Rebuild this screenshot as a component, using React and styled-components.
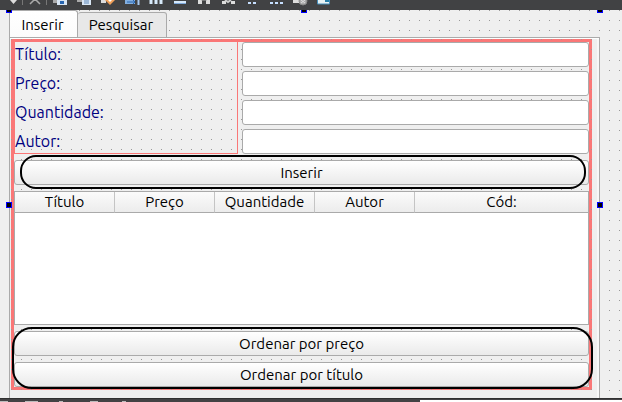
import React from "react";
import styled, { createGlobalStyle } from "styled-components";

const Global = createGlobalStyle`
  *, *::before, *::after { box-sizing: border-box; }
  body {
    margin: 0;
    overflow: hidden;
    background: #efefef;
    color: #000;
    font: 15px/20px Ubuntu, "Noto Sans", "Open Sans", sans-serif;
  }
`;

const dots = `url("data:image/svg+xml,%3Csvg xmlns='http://www.w3.org/2000/svg' width='10' height='10'%3E%3Crect width='1' height='1' fill='%23999'/%3E%3C/svg%3E")`;

const Window = styled.div`
  display: flex;
  flex-direction: column;
  min-height: 100vh;
`;

const Toolbar = styled.header`
  height: 10px;
  background: #414244;
  overflow: hidden;
  svg { display: block; }
`;

const Canvas = styled.main`
  position: relative;
  flex: 1;
  display: flex;
  padding: 0 22px 0 9px;
  background: linear-gradient(#efefef, #efefef) 0 0 / 9px 100% no-repeat, ${dots} 9px 0, #efefef;
`;

const TabWidget = styled.section`
  flex: 1;
  display: flex;
  flex-direction: column;
`;

const TabList = styled.div`
  display: flex;
  align-items: flex-end;
  height: 28px;
`;

const Tab = styled.button`
  height: ${(p) => (p.$active ? 28 : 26)}px;
  width: ${(p) => (p.$active ? 69 : 89)}px;
  padding: ${(p) => (p.$active ? "1px 2px 0 0" : "0 2px 0 0")};
  border: 1px solid #aaa;
  border-left-width: ${(p) => (p.$active ? 1 : 0)}px;
  border-bottom-width: ${(p) => (p.$active ? 0 : 1)}px;
  border-radius: 3px 3px 0 0;
  background: ${(p) => (p.$active ? "linear-gradient(#fff, #fbfbfb)" : "#e8e8e8")};
  color: inherit;
  font: inherit;
`;

const Pane = styled.div`
  flex: 1;
  display: flex;
  margin-top: -1px;
  padding: 1px 7px 8px 1px;
  border: 1px solid #aaa;
  border-bottom: 0;
  background: #efefef;
  box-shadow: inset 0 1px #fff, inset -2px 0 #f8f8f8;
`;

const Layout = styled.form`
  flex: 1;
  display: flex;
  flex-direction: column;
  padding: 3px;
  background: ${dots} 0 0, linear-gradient(#efefef, #efefef) content-box, #fa7777;
`;

const Fields = styled.div`
  display: grid;
  grid-template-columns: 224px 1fr;
  column-gap: 4px;
`;

const Labels = styled.div`
  display: grid;
  grid-auto-rows: 29px;
  height: 112px;
  border: 1px solid #fa7777;
  border-top-width: 0;
`;

const Label = styled.label`
  color: #000080;
  font-size: 16px;
  line-height: 24px;
`;

const Inputs = styled.div`
  display: grid;
  grid-auto-rows: 25px;
  row-gap: 4px;
`;

const TextBox = styled.input`
  width: 100%;
  min-width: 0;
  padding: 0 6px;
  border: 1px solid #aaa;
  border-radius: 3px;
  background: #fff;
  font: inherit;
`;

const PushButton = styled.button`
  height: 25px;
  padding: 0;
  border: 1px solid #aaa;
  border-radius: 3px;
  background: linear-gradient(#fff, #eaeaea);
  color: inherit;
  font: inherit;
`;

const InsertArea = styled.div`
  position: relative;
  display: grid;
  padding: 6px 0;
`;

const SortArea = styled.div`
  position: relative;
  display: grid;
  row-gap: 6px;
  padding-top: 6px;
`;

const Outline = styled.div`
  position: absolute;
  pointer-events: none;
  inset: ${(p) => p.$inset};
  border: 2px solid #000;
  border-radius: ${(p) => p.$radius}px;
`;

const TableView = styled.div`
  flex: 1;
  border: 1px solid #aaa;
  background: #fff;
`;

const Table = styled.table`
  width: 100%;
  table-layout: fixed;
  border-collapse: separate;
  border-spacing: 0;
`;

const HeaderCell = styled.th`
  width: ${(p) => p.$width};
  height: 21px;
  padding: 0;
  border-bottom: 1px solid #aaa;
  border-right: ${(p) => (p.$last ? "0" : "1px solid #c4c4c4")};
  background: linear-gradient(#fbfbfb, #ececec);
  font-weight: 400;
  line-height: 20px;
`;

const Handles = styled.div`
  position: absolute;
  inset: 0;
  overflow: hidden;
  pointer-events: none;
`;

const Handle = styled.i`
  position: absolute;
  width: 6px;
  height: 6px;
  border: 1px solid #00f;
  background: #000;
  left: ${(p) => p.$left};
  top: ${(p) => p.$top};
`;

const Footer = styled.footer`
  display: flex;
  height: 4px;
  border-top: 1px solid #303030;
  background: #434244;
`;

const FooterIcons = styled.div`
  flex: 0 0 420px;
  overflow: hidden;
  svg { display: block; }
`;

const FooterPanel = styled.div`
  flex: 1;
  border-top: 1px solid #434244;
  background: #fff;
`;

const fields = [
  ["titulo", "Título:"],
  ["preco", "Preço:"],
  ["quantidade", "Quantidade:"],
  ["autor", "Autor:"],
];

const columns = ["Título", "Preço", "Quantidade", "Autor", "Cód:"];

function ToolbarIcons() {
  return (
    <svg width="340" height="10" aria-hidden="true">
      <path d="M10 0h7l-3.500 4z" fill="#ddd" />
      <path d="M22.500 0v5M46.500 0v5" stroke="#777" />
      <path d="M30 4l5-5 5 5" fill="none" stroke="#aaa" strokeWidth="1.500" />
      <path d="M53 0h4v3h-4z" fill="#aaa" />
      <path d="M57 0h10v5H57z" fill="#d8e5f3" />
      <path d="M60 1h4v3h-4z" fill="#2765b0" />
      <path d="M77 0h6v2h-6z" fill="#aaa" />
      <path d="M82 0h9v5h-9z" fill="#d9e6f5" />
      <path d="M84 1h5M84 3h5" stroke="#6189b9" />
      <path d="M101 0h5v3h-5z" fill="#ddd" />
      <path d="M105 0h10l-5 5z" fill="#f0a05a" />
      <path d="M108 0h4l-2 2z" fill="#fff" />
      <path d="M125 0h10v4h-10z" fill="#83afe0" />
      <path d="M127 2h8m-2-2 2 2-2 2" fill="none" stroke="#2765b0" />
      <path d="M138.500 0v5" stroke="#a9c9ef" strokeWidth="2" />
      <path d="M151 0v4m5-4v4m5-4v4" stroke="#d7e9fa" strokeWidth="3" />
      <path d="M174 2h12" stroke="#d5e8fa" strokeWidth="2" />
      <path d="M174 3.500h12" stroke="#7ea8d9" />
      <path d="M198 0h4v4h-4zM206 0h4v4h-4z" fill="#ddd" />
      <path d="M201 0h6" stroke="#aaa" />
      <path d="M222 1h4v3h-4zM231 1h4v3h-4z" fill="#ddd" />
      <path d="M225 0l3 2 3-2" fill="none" stroke="#ccc" strokeWidth="2" />
      <path d="M248 2h3v2h-3zM253 2h3v2h-3zM270 2h3v2h-3zM275 2h3v2h-3zM280 2h3v2h-3z" fill="#c6dfff" />
      <path d="M293 0h8v3h-8z" fill="#ddd" />
      <circle cx="303" cy="1" r="4" fill="#aaa" stroke="#888" />
      <path d="M301 0l4 3m0-3-4 3" stroke="#ddd" />
      <path d="M317.500 -1h12v5h-12z" fill="#e6f2f5" stroke="#438bb8" />
      <path d="M325 0h4v2h-4z" fill="#287da5" />
    </svg>
  );
}

export default function App() {
  return (
    <>
      <Global />
      <Window>
        <Toolbar><ToolbarIcons /></Toolbar>
        <Canvas>
          <TabWidget>
            <TabList role="tablist">
              <Tab role="tab" aria-selected="true" $active>Inserir</Tab>
              <Tab role="tab" aria-selected="false">Pesquisar</Tab>
            </TabList>
            <Pane role="tabpanel">
              <Layout onSubmit={(e) => e.preventDefault()}>
                <Fields>
                  <Labels>
                    {fields.map(([id, text]) => <Label key={id} htmlFor={id}>{text}</Label>)}
                  </Labels>
                  <Inputs>
                    {fields.map(([id]) => <TextBox key={id} id={id} />)}
                  </Inputs>
                </Fields>
                <InsertArea>
                  <PushButton>Inserir</PushButton>
                  <Outline $inset="1px 3px 2px 6px" $radius={16} />
                </InsertArea>
                <TableView>
                  <Table>
                    <thead>
                      <tr>
                        {columns.map((name, i) => (
                          <HeaderCell key={name} scope="col" $width={i < 4 ? "100px" : "auto"} $last={i === 4}>{name}</HeaderCell>
                        ))}
                      </tr>
                    </thead>
                  </Table>
                </TableView>
                <SortArea>
                  <PushButton type="button">Ordenar por preço</PushButton>
                  <PushButton type="button">Ordenar por título</PushButton>
                  <Outline $inset="2px -4px -2px -2px" $radius={20} />
                </SortArea>
              </Layout>
            </Pane>
          </TabWidget>
          <Handles>
            <Handle $left="6px" $top="-3px" />
            <Handle $left="calc(50% - 10px)" $top="-3px" />
            <Handle $left="calc(100% - 25px)" $top="-3px" />
            <Handle $left="6px" $top="calc(50% - 2px)" />
            <Handle $left="calc(100% - 25px)" $top="calc(50% - 2px)" />
          </Handles>
        </Canvas>
        <Footer>
          <FooterIcons>
            <svg width="140" height="3" aria-hidden="true">
              <path d="M0 2.500h8M25 2.500h13M59 2.500h4M90 2.500h8M122 2.500h4" stroke="#bbb" />
            </svg>
          </FooterIcons>
          <FooterPanel />
        </Footer>
      </Window>
    </>
  );
}
